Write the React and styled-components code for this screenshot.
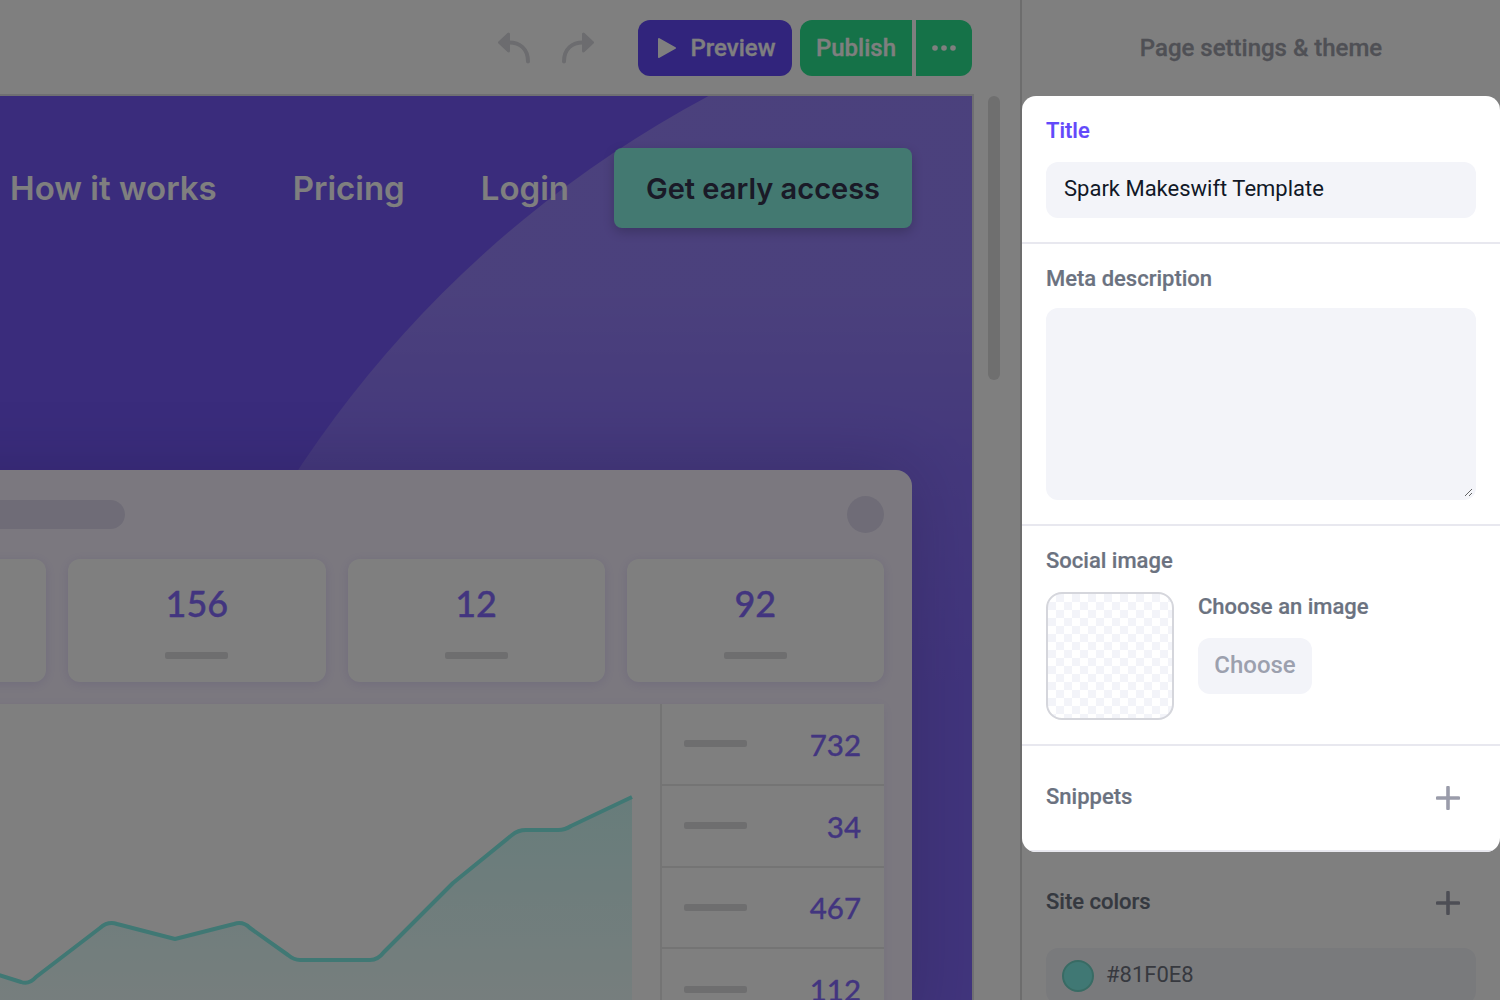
import React from "react";
import styled, { createGlobalStyle } from "styled-components";

const Global = createGlobalStyle`
  html, body { margin: 0; padding: 0; background: #fff; }
  * { box-sizing: border-box; }
  body { font-family: Roboto, "Liberation Sans", sans-serif; }
`;

const Page = styled.div`
  position: relative;
  width: 1500px;
  height: 1000px;
  overflow: hidden;
  display: flex;
  background: #fff;
`;
const Dim = styled.div`
  position: absolute;
  inset: 0;
  z-index: 5;
  background: rgba(0, 0, 0, 0.5);
`;

/* editor side */
const Editor = styled.div`
  width: 1020px;
  flex-shrink: 0;
  display: flex;
  flex-direction: column;
`;
const Toolbar = styled.div`
  height: 94px;
  flex-shrink: 0;
  display: flex;
  align-items: center;
  justify-content: flex-end;
  padding: 2px 48px 0 0;
`;
const HistoryIcon = styled.svg`
  width: 32px;
  height: 32px;
  margin-right: 32px;
  color: #d8d9de;
  transform: ${(p) => (p.$flip ? "scaleX(-1)" : "none")};
  &:last-of-type { margin-right: 44px; }
`;
const ToolButton = styled.div`
  height: 56px;
  display: flex;
  align-items: center;
  justify-content: center;
  color: #fff;
  font-size: 24px;
  font-weight: 500;
  -webkit-text-stroke: 0.3px currentColor;
  background: ${(p) => p.$bg};
  border-radius: ${(p) => p.$radius};
  width: ${(p) => p.$w}px;
  margin-left: ${(p) => p.$ml || 0}px;
  gap: ${(p) => p.$gap || 0}px;
  padding-left: ${(p) => p.$pl || 0}px;
`;
const Workspace = styled.div`
  flex: 1;
  min-height: 0;
  display: flex;
`;
const Canvas = styled.div`
  width: 974px;
  flex-shrink: 0;
  border-top: 2px solid #dedee4;
  border-right: 2px solid #dedee4;
  overflow: hidden;
`;
const Hero = styled.div`
  position: relative;
  height: 1000px;
  background: #7458f8;
  display: flex;
  flex-direction: column;
  align-items: flex-end;
  overflow: hidden;
`;
const Arc = styled.div`
  position: absolute;
  left: 113px;
  top: -132px;
  width: 2248px;
  height: 2248px;
  border-radius: 50%;
  background: linear-gradient(180deg, rgba(255,255,255,.25) 0 330px, rgba(255,255,255,.15) 490px, rgba(255,255,255,.1) 730px, rgba(255,255,255,.1) 1100px);
`;
const Nav = styled.nav`
  position: relative;
  display: flex;
  align-items: center;
  padding: 52px 60px 0 0;
  font-family: Inter, sans-serif;
  font-weight: 600;
  font-size: 33px;
  color: #fff;
`;
const NavLink = styled.span`
  margin-right: ${(p) => p.$mr}px;
  white-space: nowrap;
`;
const Cta = styled.span`
  width: 298px;
  height: 80px;
  display: flex;
  align-items: center;
  justify-content: center;
  border-radius: 8px;
  background: #86f2e2;
  color: #34344f;
  font-size: 29px;
  box-shadow: 0 4px 12px rgba(0, 0, 0, 0.2);
  white-space: nowrap;
`;
const Dash = styled.div`
  position: relative;
  width: 1151px;
  flex-shrink: 0;
  margin: 242px 60px 0 0;
  padding: 0 28px;
  border-radius: 16px 16px 0 0;
  background: #f7f1ff;
  box-shadow: 0 0 70px rgba(30, 20, 60, 0.18);
`;
const DashHead = styled.div`
  height: 89px;
  display: flex;
  align-items: center;
  justify-content: space-between;
  padding-bottom: 1px;
`;
const Pill = styled.div`
  width: 336px;
  height: 29px;
  border-radius: 15px;
  background: #ded9ee;
`;
const Avatar = styled.div`
  width: 37px;
  height: 37px;
  border-radius: 50%;
  background: #ded9ee;
`;
const Stats = styled.div`
  display: grid;
  grid-template-columns: repeat(4, 1fr);
  gap: 22px;
`;
const StatCard = styled.div`
  height: 123px;
  border-radius: 12px;
  background: #fff;
  box-shadow: 0 2px 12px rgba(90, 70, 200, 0.14);
  display: flex;
  flex-direction: column;
  align-items: center;
  justify-content: flex-end;
  padding-bottom: 23px;
`;
const StatValue = styled.div`
  font-family: Lato, sans-serif;
  font-size: 36px;
  line-height: 46px;
  font-weight: 500;
  -webkit-text-stroke: 0.4px currentColor;
  color: #856bff;
`;
const Dash63 = styled.div`
  width: 63px;
  height: 7px;
  border-radius: 2px;
  background: #dddddf;
`;
const StatBar = styled(Dash63)`
  margin-top: 26px;
`;
const Lower = styled.div`
  display: flex;
  margin-top: 22px;
  background: #fff;
  box-shadow: 0 2px 12px rgba(90, 70, 200, 0.08);
`;
const Chart = styled.div`
  flex: 1;
  display: flex;
  justify-content: flex-end;
`;
const ChartSvg = styled.svg`
  display: block;
  width: 660px;
  height: 296px;
  flex-shrink: 0;
`;
const Table = styled.div`
  width: 224px;
  flex-shrink: 0;
  border-left: 2px solid #e8e8e8;
`;
const TableRow = styled.div`
  height: 81.75px;
  display: flex;
  align-items: center;
  justify-content: space-between;
  padding: 0 23px 0 22px;
  border-bottom: 2px solid #e8e8e8;
`;
const TableValue = styled.span`
  font-family: Lato, sans-serif;
  font-size: 29.5px;
  line-height: 36px;
  padding-top: 2px;
  font-weight: 500;
  -webkit-text-stroke: 0.3px currentColor;
  color: #856bff;
`;
const Thumb = styled.div`
  width: 12px;
  height: 284px;
  margin: 2px 0 0 14px;
  border-radius: 6px;
  background: #dededf;
`;

/* settings side */
const Panel = styled.aside`
  width: 480px;
  flex-shrink: 0;
  border-left: 2px solid #dadada;
  display: flex;
  flex-direction: column;
`;
const PanelTitle = styled.div`
  height: 96px;
  flex-shrink: 0;
  display: flex;
  align-items: center;
  justify-content: center;
  font-size: 24px;
  font-weight: 500;
  -webkit-text-stroke: 0.3px currentColor;
  color: #9ea0aa;
`;
const Spotlight = styled.div`
  position: relative;
  z-index: 10;
  flex-shrink: 0;
  background: #fff;
  border-radius: 14px;
  overflow: hidden;
`;
const Section = styled.section`
  padding: ${(p) => p.$pad || "23px 24px 24px"};
  border-bottom: 2px solid #e8e8ef;
`;
const Label = styled.div`
  font-size: 22px;
  line-height: 24px;
  font-weight: 500;
  -webkit-text-stroke: 0.2px currentColor;
  color: ${(p) => (p.$active ? "#6249fa" : "#6b7280")};
  margin-bottom: ${(p) => p.$mb || 0}px;
`;
const Field = styled.div`
  height: 56px;
  display: flex;
  align-items: center;
  padding: 0 18px 3px;
  border-radius: 12px;
  background: #f3f4f9;
  font-size: 22px;
  color: #111827;
`;
const Area = styled.textarea`
  display: block;
  width: 100%;
  height: 192px;
  border: 3px solid #f3f4f9;
  outline: 0;
  border-radius: 12px;
  background: #f3f4f9;
  resize: vertical;
`;
const ImageRow = styled.div`
  display: flex;
  gap: 24px;
`;
const Checker = styled.div`
  width: 128px;
  height: 128px;
  border: 2px solid #d5d6dc;
  border-radius: 16px;
  background: repeating-conic-gradient(#f3f4f9 0 25%, #fff 0 50%) 0 0 / 16px 16px;
`;
const ImageSide = styled.div`
  padding-top: 3px;
  display: flex;
  flex-direction: column;
  align-items: flex-start;
`;
const ChooseButton = styled.div`
  width: 114px;
  height: 56px;
  display: flex;
  align-items: center;
  justify-content: center;
  padding-bottom: 2px;
  border-radius: 12px;
  background: #f3f4f9;
  color: #9ca0ae;
  font-size: 24px;
  font-weight: 500;
`;
const HeadRow = styled.div`
  display: flex;
  align-items: center;
  justify-content: space-between;
  padding-right: 16px;
`;
const Plus = styled.svg`
  display: block;
  width: 24px;
  height: 24px;
  color: #9a9caa;
`;
const Below = styled.div`
  padding: 38px 24px 0;
`;
const ColorRow = styled.div`
  height: 56px;
  margin-top: 32px;
  display: flex;
  align-items: center;
  gap: 12px;
  padding: 0 16px;
  border-radius: 12px;
  background: #f3f4f9;
`;
const Hex = styled.span`
  font-size: 22px;
  color: #6e727e;
  margin-bottom: 4px;
`;
const Swatch = styled.div`
  width: 32px;
  height: 32px;
  border-radius: 50%;
  background: #81f0e8;
  border: 2px solid #70d6c8;
`;

const PlusIcon = () => (
  <Plus viewBox="0 0 24 24" fill="none" stroke="currentColor" strokeWidth="3.6" strokeLinecap="round">
    <path d="M12 1.5v21M1.5 12h21" />
  </Plus>
);
const ArrowIcon = ({ flip }) => (
  <HistoryIcon $flip={flip} viewBox="0 0 32 32">
    <path d="M1.5 10.5 10.5 2V19Z" fill="currentColor" stroke="currentColor" strokeWidth="3" strokeLinejoin="round" />
    <path d="M10 10.5C22 10 30 17 30 29.5" fill="none" stroke="currentColor" strokeWidth="4" strokeLinecap="round" />
  </HistoryIcon>
);

const line =
  "M-4 974L21 982Q29 985 36 977L100 928Q108 921 117 924L175 939L234 924Q243 921 250 928L288 955Q294 960 300 960L370 960Q378 960 384 952L453 883L512 835Q518 830 526 830L558 830Q565 830 571 826L632 797";

export default function App() {
  return (
    <Page>
      <Global />
      <Editor>
        <Toolbar>
          <ArrowIcon />
          <ArrowIcon flip />
          <ToolButton $bg="#6248f8" $radius="12px" $w={154} $gap={14} $pl={2}>
            <svg width="20" height="24" viewBox="0 0 20 24">
              <path d="M2 3 18 12 2 21Z" fill="currentColor" stroke="currentColor" strokeWidth="2" strokeLinejoin="round" />
            </svg>
            Preview
          </ToolButton>
          <ToolButton $bg="#2ae490" $radius="12px 0 0 12px" $w={112} $ml={8}>Publish</ToolButton>
          <ToolButton $bg="#2ae490" $radius="0 12px 12px 0" $w={56} $ml={4}>
            <svg width="26" height="8" viewBox="0 0 26 8" fill="currentColor">
              <circle cx="4" cy="4" r="2.8" /><circle cx="13" cy="4" r="2.8" /><circle cx="22" cy="4" r="2.8" />
            </svg>
          </ToolButton>
        </Toolbar>
        <Workspace>
          <Canvas>
            <Hero>
              <Arc />
              <Nav>
                <NavLink $mr={76}>How it works</NavLink>
                <NavLink $mr={76}>Pricing</NavLink>
                <NavLink $mr={45}>Login</NavLink>
                <Cta>Get early access</Cta>
              </Nav>
              <Dash>
                <DashHead><Pill /><Avatar /></DashHead>
                <Stats>
                  <StatCard><StatBar /></StatCard>
                  <StatCard><StatValue>156</StatValue><StatBar /></StatCard>
                  <StatCard><StatValue>12</StatValue><StatBar /></StatCard>
                  <StatCard><StatValue>92</StatValue><StatBar /></StatCard>
                </Stats>
                <Lower>
                  <Chart>
                    <ChartSvg viewBox="0 704 660 296">
                      <defs>
                        <linearGradient id="area" x1="0" y1="0" x2="0" y2="1">
                          <stop offset="0" stopColor="#81f0e8" stopOpacity="0.38" />
                          <stop offset="1" stopColor="#81f0e8" stopOpacity="0.14" />
                        </linearGradient>
                      </defs>
                      <path d={line + "L632 1000L-4 1000Z"} fill="url(#area)" />
                      <path d={line} fill="none" stroke="#81f0e8" strokeWidth="4" strokeLinejoin="round" />
                    </ChartSvg>
                  </Chart>
                  <Table>
                    <TableRow><Dash63 /><TableValue>732</TableValue></TableRow>
                    <TableRow><Dash63 /><TableValue>34</TableValue></TableRow>
                    <TableRow><Dash63 /><TableValue>467</TableValue></TableRow>
                    <TableRow><Dash63 /><TableValue>112</TableValue></TableRow>
                  </Table>
                </Lower>
              </Dash>
            </Hero>
          </Canvas>
          <Thumb />
        </Workspace>
      </Editor>
      <Panel>
        <PanelTitle>Page settings &amp; theme</PanelTitle>
        <Spotlight>
          <Section>
            <Label $active $mb={19}>Title</Label>
            <Field>Spark Makeswift Template</Field>
          </Section>
          <Section>
            <Label $mb={17}>Meta description</Label>
            <Area />
          </Section>
          <Section>
            <Label $mb={19}>Social image</Label>
            <ImageRow>
              <Checker />
              <ImageSide>
                <Label $mb={19}>Choose an image</Label>
                <ChooseButton>Choose</ChooseButton>
              </ImageSide>
            </ImageRow>
          </Section>
          <Section $pad="39px 24px 39px">
            <HeadRow>
              <Label $mb={2}>Snippets</Label>
              <PlusIcon />
            </HeadRow>
          </Section>
        </Spotlight>
        <Below>
          <HeadRow>
            <Label $mb={2}>Site colors</Label>
            <PlusIcon />
          </HeadRow>
          <ColorRow><Swatch /><Hex>#81F0E8</Hex></ColorRow>
        </Below>
      </Panel>
      <Dim />
    </Page>
  );
}
